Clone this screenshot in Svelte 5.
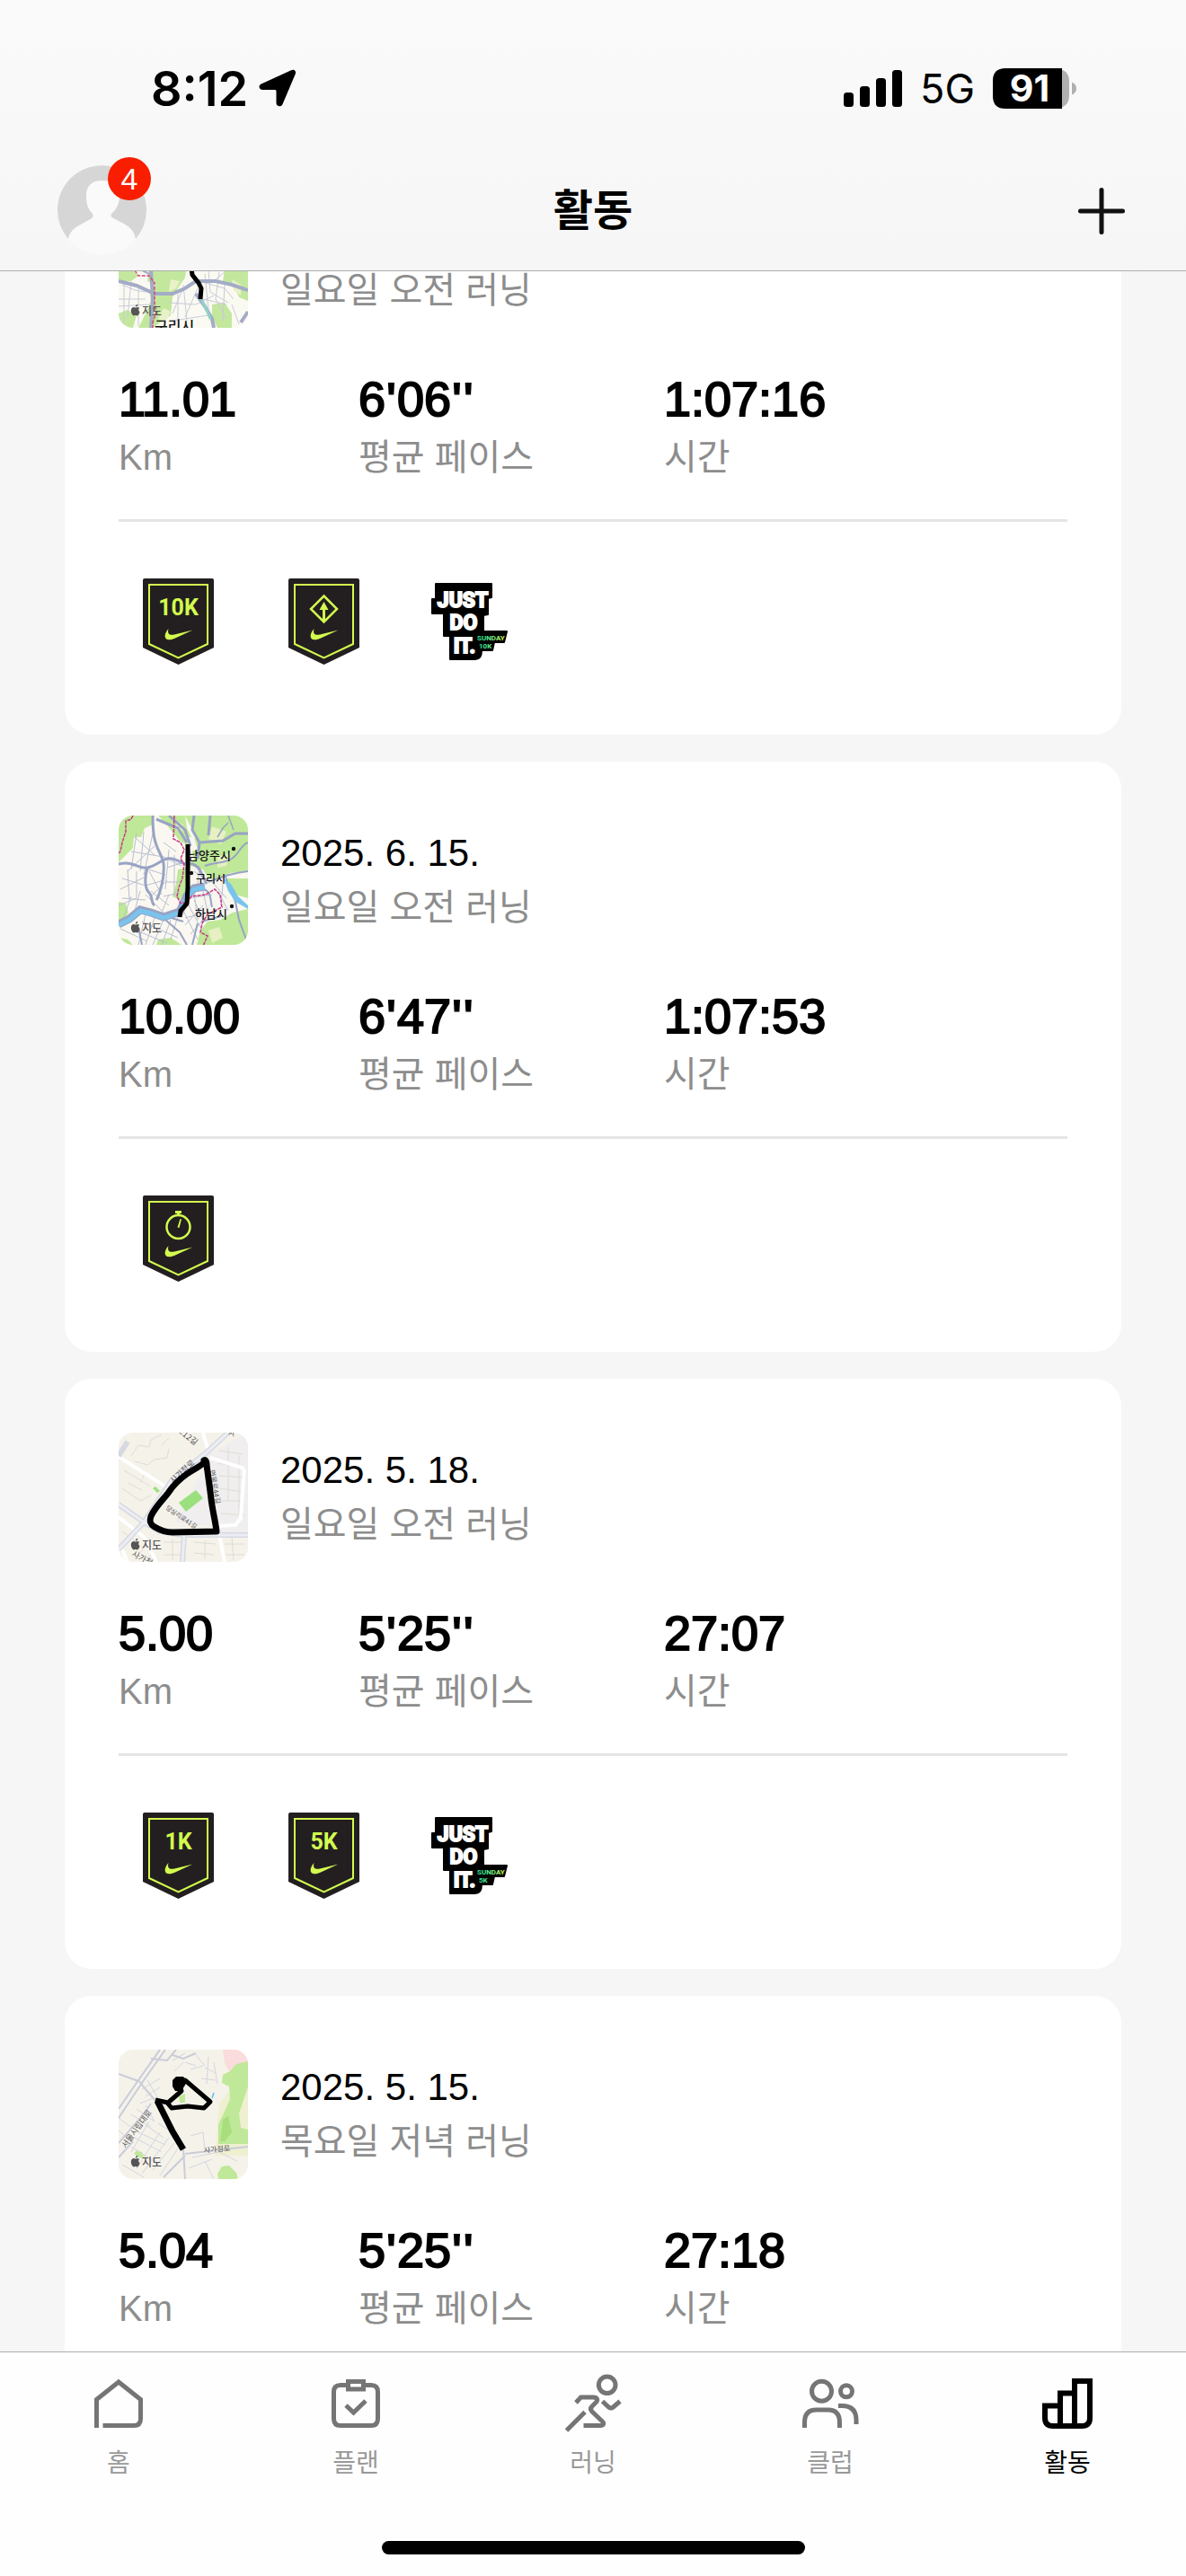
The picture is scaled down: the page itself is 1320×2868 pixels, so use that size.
<script>
	import { onMount } from 'svelte'

	let runs = [
		{
			map: 'guri',
			date: '2025. 6. 22.',
			title: '일요일 오전 러닝',
			distance: '11.01',
			pace: ['6', '06'],
			time: '1:07:16',
			badges: [
				{ type: 'distance', label: '10K' },
				{ type: 'longest' },
				{ type: 'sunday', label: '10K' }
			]
		},
		{
			map: 'hanam',
			date: '2025. 6. 15.',
			title: '일요일 오전 러닝',
			distance: '10.00',
			pace: ['6', '47'],
			time: '1:07:53',
			badges: [{ type: 'duration' }]
		},
		{
			map: 'triangle',
			date: '2025. 5. 18.',
			title: '일요일 오전 러닝',
			distance: '5.00',
			pace: ['5', '25'],
			time: '27:07',
			badges: [
				{ type: 'distance', label: '1K' },
				{ type: 'distance', label: '5K' },
				{ type: 'sunday', label: '5K' }
			]
		},
		{
			map: 'campus',
			date: '2025. 5. 15.',
			title: '목요일 저녁 러닝',
			distance: '5.04',
			pace: ['5', '25'],
			time: '27:18',
			badges: []
		}
	]

	let tabs = [
		{ id: 'home', label: '홈' },
		{ id: 'plan', label: '플랜' },
		{ id: 'run', label: '러닝' },
		{ id: 'club', label: '클럽' },
		{ id: 'activity', label: '활동' }
	]

	let active = $state('activity')
	let unread = $state(4)
	let feed

	onMount(() => {
		feed.scrollTop = 171
	})

	function select(e, id) {
		e.preventDefault()
		active = id
	}
</script>

{#snippet attribution()}
	<g fill="#555">
		<path d="M19.5 121.5c1-.8 2.600-.9 3.600.3-1.300 1-1.300 3.600.5 4.400-.6 2-1.800 4.300-3.100 4.300-.7 0-.9-.4-1.700-.4s-1 .4-1.700.4c-1.600 0-3.300-3.200-3.300-5.700 0-3 2.200-4.300 3.900-3.600.8.300 1.200.6 1.800.3zM18.800 120.600c0-1.500 1.100-2.700 2.500-2.900.1 1.600-1 2.900-2.500 2.900z" />
		<text x="26" y="130" font-size="12" font-weight="500">지도</text>
	</g>
{/snippet}

{#snippet swoosh()}
	<path fill="#d3fb4f" d="M28.500 56C23 62 23.500 68.500 29.500 68.300c2 0 4-.8 6.500-1.800L55.500 57.500 35 62.500c-5 1.100-8.200-.5-6.500-6.500z" />
{/snippet}

{#snippet mapTile(name)}
	<svg class="map" viewBox="0 0 144 144" role="img" aria-label="러닝 경로">
		{#if name === 'guri'}
			<rect width="144" height="144" fill="#fbfaf2" />
			<g fill="#c3e89d">
				<path d="M34 76h42l-2 12-8 12-6 10-2 20-20 14h-16l8-16 6-14-2-12 8-6-10-4z" />
				<path d="M0 80h16l6 6-8 6H0zM0 128l10-4 10 6-4 14H0zM104 118l14-2 8 12 0 16h-16l-6-12zM118 80h26v34l-10-4-6-14-12-4z" />
			</g>
			<path fill="#eaf1c8" d="M58 90l10 2-4 8-8 4zM50 122l8 4-6 12-8-4zM126 90l10 6v12l-8-6z" />
			<g fill="none" stroke="#c6cad9" stroke-width="1">
				<path d="M4 96l14 6 12 2M6 90v50M14 92l-4 40M0 112h30M0 120l34-2M22 96v46M60 128l10-24 20-14M56 116l30 2 20-10M66 104v30M72 96l4 40M96 84l4 40 6 20M90 92l28 8 10 12M100 80l2 24 20 12M112 82l-4 30 12 22M60 136l40-6M88 100l-14 32M118 96l-2 40M126 118l8 22M94 112l26 6M108 90l10-8" />
			</g>
			<g fill="none" stroke="#a3abc6" stroke-width="4">
				<path d="M0 92l20 5 20 9h20l14-6 12-8 22 0 18 4 18 6" />
				<path d="M36 80l2 30-2 34M86 106l10 14 8 14 2 10" />
				<path d="M34 84l-8-4" stroke-width="2" />
				<path d="M144 126l-8 12" />
			</g>
			<path fill="none" stroke="#8fd3c8" stroke-width="3" d="M90 108l8 16 4 10" />
			<path fill="none" stroke="#d0497c" stroke-width="1.500" stroke-dasharray="4 1.500" d="M18 80l4 6 12 0 6 8 0 22 2 10-4 12 0 6" />
			<path class="route" d="M76 40l4 30 2 15 7 9 3 6-1 12" />
			<text x="40" y="148" font-size="16" font-weight="500" fill="#111">구리시</text>
		{:else if name === 'hanam'}
			<rect width="144" height="144" fill="#faf8f0" />
			<g fill="#bfe898">
				<path d="M0 0h40l-2 10-9 4-4 10-8 0-1 12-6 6-10 10z" />
				<path d="M44 0h30l2 14 8 16-6 4-10-6-10-12-8-10zM74 0h70v62l-20 2-16 8-14-4-10 6-8-16 8-10-4-16 6-8z" />
				<path d="M66 60l12-2-2 24-8 12-8-4 4-14zM0 96l8 2 3 10-5 8-6 0zM144 104v40H87l4-16 8-10 14-2 14-8zM120 70h24v22l-14-4zM0 136l10 2 6 6H0zM44 138l14-2 12 8H42z" />
			</g>
			<path fill="#e6f0c2" d="M64 6l8 4-2 10-6-4zM104 12l16 6-6 14-14-6zM110 46l14-4-4 14-10 2zM100 128l12-4 4 12-12 6z" />
			<g fill="#f7f6ef">
				<path d="M80 56l14 4 6 10 16 4 14 16 2 10-14 6-8-2-8 12-8 6-10-14 0-18-6-6zM76 24l8 0 4 14-8 2z" />
			</g>
			<g fill="none" stroke="#b9bfd3" stroke-width="1">
				<path d="M18 24l22 20M14 40l36 6M8 52l44 14M20 20l-6 40M28 18l-4 44M38 20l-10 46M10 62l30-28M4 70l26 8M2 82l28-14M10 60l2 34M20 62v30M4 92l26 2M34 62l14 26M30 78l20-6M36 90l18-18M50 46l20 10M56 38l-4 44M62 44v46M54 58l18-6M52 74l16 0M50 90l18-4M50 30l14 10" />
				<path d="M0 100l20-8M14 90l-8 22M24 84l-6 22M30 88l20 20M56 88l-8 20M36 84l20 16M2 126l30 14M30 110l-8 34M40 114l-10 30M50 116l-12 28M58 116l-10 28M66 112l-8 26M26 118l40 18M20 128l34 14M72 106l16 32M78 100l14 26M84 94l10 22M74 122l20-22M80 132l18-20M78 92l26-4M84 86l4 30M94 84l6 28M74 114l24-6M84 62l14 10M90 56l-2 20M104 74l16 18M110 84l12 22M116 76l-2 24" />
			</g>
			<g fill="none" stroke="#98a3c4" stroke-width="3">
				<path d="M38 0c0 22 2 30 8 42s4 16 4 22-4 24-8 30M0 54c18-4 22 6 32 4s14-8 22-10 14 4 20 6M32 58c-4 14-2 24 2 28s2 12 6 14M42 4l24 10 10 16M56 0l18 16 6 18M84 0l-2 16 8 14-2 18M90 30l26-2 14-8 14 0M102 0l-2 22M76 54c8-2 14 4 16 10l6 12" />
				<path d="M144 30c-10 4-10 16-22 20s-16 2-26 6M100 74c16-6 26-10 44-12M118 66l12 30 4 20 8 22M72 118l-20-6M92 82c12 0 10 14 12 20M88 120l-6 24M22 124l4 20M52 116l16 14 8 14M92 118l22-6" stroke-width="2" />
				<path d="M110 24l6-10 6-6M128 16l-6-16" stroke-width="1.500" />
			</g>
			<path fill="none" stroke="#98a3c4" stroke-width="9" d="M0 121l12-6 12-10 12 3 14 5 18-6 8-18 8-8 12-2" />
			<path fill="none" stroke="#79c4ec" stroke-width="5" d="M0 122l12-6 12-10 12 3 14 5 18-6 8-18 8-8 12-2" />
			<path fill="#79c4ec" d="M117 70l8 6 8 14 11 10v4l-14-8-8-12z" />
			<g fill="none" stroke="#c43a86" stroke-width="1.500" stroke-dasharray="4 1">
				<path d="M16 0l-2 4-6 2 0 12-4 12-2 10-2 2M62 0l-1 26 8 4 4 8-4 10 4 6-2 16-4 10-2 10 4 8 8-2 4-6 16-2 10-6 6 6 2 14-8 4-8 4-6 10-2 10 8 4-8 18" />
			</g>
			<path class="route" d="M77 32v48l-1 18-7 8-1 7" />
			<g fill="#111" font-weight="500">
				<circle cx="128" cy="37" r="2.200" />
				<circle cx="81" cy="64" r="2.200" />
				<circle cx="126" cy="101" r="2.200" />
				<text x="77" y="49" font-size="13">남양주시</text>
				<text x="86" y="75" font-size="12">구리시</text>
				<text x="85" y="114" font-size="13">하남시</text>
			</g>
		{:else if name === 'triangle'}
			<rect width="144" height="144" fill="#f5f2ea" />
			<path fill="#f0eeee" d="M100 24l44-24v110l-34 2-10-80zM62 100l24-44 8-14 10 62z" />
			<g fill="none" stroke="#dfdcd6" stroke-width="1">
				<path d="M14 26l8-12 12 2 2-8 12-6M18 32l14 4 8-6 14-2 2-10M48 14l8-8M6 42l30 18M4 62l20 14 12-6M10 56l16 8M30 44l-6 12M112 20l26 4M110 34l28 4M112 48l28 2M112 62l26 4M114 76l26 0M114 90l26 2M122 16v60M134 26v64M126 116l2 26M50 122l24 0M50 136l24 0M60 118v24M84 122l24 2M84 134l22 2M96 120v20M118 124l22 0M118 136l22 0M6 98l18 14M4 110l14 10M32 120l-8 14M40 124l-6 16" />
			</g>
			<g fill="none" stroke="#fff" stroke-width="4">
				<path d="M0 27l52 33M108 104l22-1 6-8 4-54M112 114l6 30M0 94l28 22 14 28M94 0l6 22M140 40l-38-12M10 144l-8-18" />
			</g>
			<path fill="none" stroke="#d6d9e2" stroke-width="6" d="M0 130l28-30 32-48 38-30 26-24M0 80l30 21 16 9 24 4 74 0M73 114l-2 30M0 26l10-16" />
			<path fill="none" stroke="#eceef3" stroke-width="3" d="M0 130l28-30 32-48 38-30 26-24M0 80l30 21 16 9 24 4 74 0M73 114l-2 30" />
			<path fill="#9be07f" d="M67 78l19-14 8 9-19 15zM38 62l3-2 5 5-3 2z" />
			<g fill="#555" font-size="9">
				<text transform="translate(64 -2) rotate(38)">로12길</text>
				<text transform="translate(61 57) rotate(-43)">사가정로</text>
				<text transform="translate(52 85) rotate(34)" font-size="7">당심리로41길</text>
				<text transform="translate(14 137) rotate(28)">사가정</text>
				<text transform="translate(101 42) rotate(80)" font-size="8">면목로44길</text>
				<text x="122" y="3" font-size="8">사</text>
			</g>
			<path class="route wide" d="M96 32c-3 5-13 9-20 14S60 60 56 66 41 82 36 93c-2 6-1 9 4 12s12 6 20 6l49-1c-1-10-5-26-6-36s-4-30-5-38c0-4-1-6-3-5z" />
		{:else}
			<rect width="144" height="144" fill="#f5f2ea" />
			<path fill="#eef0d0" d="M112 60l8-10 12-10 12-14v92h-36z" />
			<path fill="#f9dcdb" d="M116 0h28v17l-12 0-9 7-5-8z" />
			<g fill="#bfe898">
				<path d="M116 28l8-4 7-8 13-3v28l-6 18-4 12 2 16 8 2v16h-33l0-22 5-10 8-18-1-14-8-4zM111 144l-1-6 5-8 8-1 8 8 2 7zM20 112l6 2 3 8-6-2-6-4zM67 52l7-3v10h-6z" />
			</g>
			<path fill="#a8de7e" d="M116 78l6-4 4 18-8 10-5 0z" />
			<g fill="none" stroke="#d3d5de" stroke-width="1">
				<path d="M60 12l14-8M62 24l10-10M74 14l12 4M80 22l14-4M86 6l10 12M96 20l12 6M92 32l16 2M100 8l-2 30M106 14l4 24M26 44l20-12M30 52l16-10M32 34l12 20M24 60l14-6M20 66l20 14M14 72l22 14M30 62l10 18M22 92l30 14M18 98l30 16M30 84l20 14M14 108l28 18M34 80l-20 34M46 92l-26 40M56 98l-30 40M62 104l-24 30M66 110l-20 30M44 82l22 14M0 76l16 12M0 90l14 12M4 128l24 14M80 96l14-4 2 20M82 120l30-6 20 10M78 132l26-10M96 124l10 20" />
			</g>
			<g fill="none" stroke="#c9ccd8" stroke-width="2">
				<path d="M46 0L22 34 0 66M52 0L28 34 0 76M60 6l12 4 14-6M22 34l8 10 12 14M0 27l22 8M72 110l2 34M74 116l70-8M74 118L50 142M36 10l18 2 10-12M0 104l26-30 10-14M0 120l16-18" />
			</g>
			<path fill="none" stroke="#5bc1e8" stroke-width="1.500" d="M106 48l-2 6" />
			<g fill="#555">
				<text transform="translate(8 110) rotate(-54)" font-size="9">서울시립대로</text>
				<text transform="translate(95 115) rotate(-5)" font-size="8">사가정로</text>
			</g>
			<path class="route" d="M41 56l14 3 15-13-4-10 8-2 28 24-7 7-18-2-18 2-5-6" />
			<path class="route wide" d="M43 57l8 16 9 18 12 20" />
			<path fill="#000" d="M60 34l4-4 8 0 4 6-6 10h-7l-3-5z" />
		{/if}
		{@render attribution()}
	</svg>
{/snippet}

{#snippet badge(item)}
	{#if item.type === 'sunday'}
		<svg width="85" height="86" viewBox="0 0 85 86" role="img" aria-label="Just Do It Sunday {item.label}">
			<defs>
				<linearGradient id="neon-{item.label}" x1="50" x2="83" y1="0" y2="0" gradientUnits="userSpaceOnUse">
					<stop offset="0" stop-color="#1fdca4" />
					<stop offset=".5" stop-color="#5ff08c" />
					<stop offset="1" stop-color="#e2f94a" />
				</linearGradient>
			</defs>
			<path stroke="#000" stroke-width="2" stroke-linejoin="round" d="M5 1h62v15l-4 1v18l-5 1v18h26l-3 12H70l-2 9H56q0 10-7 10H21V59h-7V34H1V18h4z" />
			<g class="jdi" text-anchor="middle">
				<text x="35" y="27">JUST</text>
				<text x="36" y="52">DO</text>
				<text x="37" y="78">IT.</text>
			</g>
			<g class="sunday" fill="url(#neon-{item.label})">
				<text x="51" y="64">SUNDAY</text>
				<text x="53" y="73">{item.label}</text>
			</g>
		</svg>
	{:else}
		<svg width="79" height="96" viewBox="0 0 79 96" role="img" aria-label={item.label ?? item.type}>
			<path fill="#231f20" d="M2 0h75q2 0 2 2v75L39.500 96 0 77V2q0-2 2-2z" />
			<path fill="none" stroke="#d3fb4f" stroke-width="2" d="M7 7h65v66L39.500 88.500 7 73z" />
			{#if item.type === 'distance'}
				<text class="flag" x="39.500" y="41" text-anchor="middle">{item.label}</text>
			{:else if item.type === 'longest'}
				<path fill="none" stroke="#d3fb4f" stroke-width="2.500" d="M39.500 19.500L54 34 39.500 48.500 25 34z" />
				<path fill="#d3fb4f" d="M39.500 26l5 9h-3.500v13h-3V35h-3.500z" />
			{:else}
				<circle cx="39.500" cy="35" r="13" fill="none" stroke="#d3fb4f" stroke-width="2.500" />
				<path fill="#d3fb4f" d="M36 17h7v3h-2v3h-3v-3h-2zM41.500 26l1.500.5-2.500 9.500-2-.5z" />
			{/if}
			{@render swoosh()}
		</svg>
	{/if}
{/snippet}

<div class="app">
	<header>
		<div class="status">
			<div class="clock">
				<span>8:12</span>
				<svg width="42" height="42" viewBox="0 0 42 42" aria-hidden="true">
					<path d="M36 1.300c3-1.800 6 .7 4.800 4L26.500 39c-1.500 3.500-7 3-7-1.500V25c0-1.500-.5-2-2-2H4.500C0 23-.8 18 2.700 16.500z" />
				</svg>
			</div>
			<div class="signals">
				<svg width="65" height="41" viewBox="0 0 65 41" aria-hidden="true">
					<rect y="25" width="11" height="16" rx="3.500" />
					<rect x="18" y="18" width="11" height="23" rx="3.500" />
					<rect x="36" y="9" width="11" height="32" rx="3.500" />
					<rect x="54" width="11" height="41" rx="3.500" />
				</svg>
				<span class="network">5G</span>
				<svg width="93" height="45" viewBox="0 0 93 45" role="img" aria-label="91%">
					<path d="M14 0h63v45H14Q0 45 0 31V14Q0 0 14 0z" />
					<path fill="#b0b0b0" d="M77 1.500q8 3.500 8 12.500v17q0 9-8 12.500zM88 15.500q5 2 5 7t-5 7z" />
					<text x="41" y="37" text-anchor="middle">91</text>
				</svg>
			</div>
		</div>
		<div class="titlebar">
			<button class="avatar" aria-label="프로필">
				<svg width="99" height="99" viewBox="0 0 99 99" aria-hidden="true">
					<circle cx="49.500" cy="49.500" r="49" fill="#fafafa" />
					<path fill="#d6d6d6" d="M12 81A49.500 49.500 0 1 1 87 81C85 69 76 65 68 61c-6-3-10-4-8-8 6-5 9-12 9-20 0-11-8-17-19.500-17S32 22 32 33c0 9 2 15 7 20 2 4-1 5-8 9-9 5-17 8-19 19z" />
				</svg>
				{#if unread}
					<span class="unread">{unread}</span>
				{/if}
			</button>
			<h1>활동</h1>
			<button class="add" aria-label="활동 추가">
				<svg width="60" height="60" viewBox="0 0 60 60" aria-hidden="true">
					<path d="M30 6.500v47M6.500 30h47" stroke="#111" stroke-width="5" stroke-linecap="round" />
				</svg>
			</button>
		</div>
	</header>

	<main bind:this={feed}>
		{#each runs as run}
			<article>
				<div class="summary">
					{@render mapTile(run.map)}
					<div>
						<p class="date">{run.date}</p>
						<p class="title">{run.title}</p>
					</div>
				</div>
				<dl>
					<div>
						<dt>Km</dt>
						<dd>{run.distance}</dd>
					</div>
					<div>
						<dt>평균 페이스</dt>
						<dd>{run.pace[0]}<b>'</b>{run.pace[1]}<b>''</b></dd>
					</div>
					<div>
						<dt>시간</dt>
						<dd>{run.time}</dd>
					</div>
				</dl>
				<ul>
					{#each run.badges as item}
						<li>{@render badge(item)}</li>
					{/each}
				</ul>
			</article>
		{/each}
	</main>

	<footer>
		<nav>
			{#each tabs as tab}
				<a
					href="#{tab.id}"
					class:active={active === tab.id}
					aria-current={active === tab.id ? 'page' : undefined}
					onclick={(e) => select(e, tab.id)}
				>
					<svg width="72" height="72" viewBox="0 0 72 72" aria-hidden="true">
						{#if tab.id === 'home'}
							<path d="M11.500 63V31.500L36 12l24.500 19.500V53q0 7.500-7.500 7.500H18.500" />
						{:else if tab.id === 'plan'}
							<path d="M27 15.500h-8q-7.500 0-7.500 7.500v30q0 7.500 7.500 7.500h34q7.500 0 7.500-7.500V23q0-7.500-7.500-7.500h-8M27.500 11.500h17v8.500h-17zM25 38l8.500 8L47 33" />
						{:else if tab.id === 'run'}
							<circle cx="51.700" cy="15.300" r="9.300" />
							<path d="M46.500 33.500l7 6.500q2.500 2 5 0l7.500-6.500M17 35l5.500-6H36c5 0 6 3 3 6l-4 4c-2 2-2 4 0 6l11.500 11c2 2 1.500 4.500-2 4.500H25.500M6.500 66L27 45.500" />
						{:else if tab.id === 'club'}
							<circle cx="26.500" cy="22.300" r="11" />
							<circle cx="54" cy="22.300" r="6.500" />
							<path d="M7.500 63v-6q0-14 13-14h13q13 0 13 14v6M45 38.500h4q16 0 16 16V59" />
						{:else}
							<path stroke-width="6" d="M28 38.500H11V52q0 9 9 9h32q9 0 9-9V11H44v50M44 24.500H28V61" />
						{/if}
					</svg>
					<span>{tab.label}</span>
				</a>
			{/each}
		</nav>
		<div class="home-indicator"></div>
	</footer>
</div>

<style>
	:global(body) {
		margin: 0;
		background: #f6f6f6;
	}

	.app {
		display: flex;
		flex-direction: column;
		height: 100vh;
		color: #000;
		font-family: 'Liberation Sans', 'Noto Sans CJK KR', sans-serif;
	}

	h1, p, dl, dd, ul {
		margin: 0;
		padding: 0;
	}

	button {
		padding: 0;
		border: 0;
		background: none;
		font: inherit;
		cursor: pointer;
	}

	svg {
		display: block;
		flex: none;
		overflow: visible;
	}

	/* header */
	header {
		flex: none;
		border-bottom: 1px solid #adadad;
		background: linear-gradient(#fafafa, #f6f6f6);
	}

	.status {
		display: flex;
		justify-content: space-between;
		align-items: center;
		box-sizing: border-box;
		height: 168px;
		padding: 28px 122px 0 168px;
		font-family: Inter, sans-serif;
	}

	.clock {
		display: flex;
		align-items: center;
		gap: 12px;
		font-size: 54px;
		font-weight: 600;
	}

	.signals {
		display: flex;
		align-items: center;
		gap: 20px;
	}

	.network {
		font-size: 45px;
	}

	.signals text {
		fill: #fff;
		font-size: 41px;
		font-weight: 700;
	}

	.titlebar {
		display: grid;
		grid-template-columns: 1fr auto 1fr;
		align-items: center;
		height: 133px;
		padding: 0 64px;
	}

	h1 {
		font-size: 48px;
		font-weight: 700;
		line-height: 60px;
	}

	.avatar {
		position: relative;
		justify-self: start;
	}

	.unread {
		position: absolute;
		top: -10px;
		right: -5px;
		width: 48px;
		border-radius: 24px;
		background: #fa1e00;
		color: #fff;
		font-size: 34px;
		line-height: 48px;
	}

	.add {
		justify-self: end;
	}

	/* feed */
	main {
		flex: 1;
		min-height: 0;
		overflow-y: auto;
		scrollbar-width: none;
		padding: 30px 72px 0;
	}

	article {
		margin-bottom: 30px;
		padding: 60px;
		border-radius: 30px;
		background: #fff;
	}

	.summary {
		display: flex;
		align-items: center;
		gap: 36px;
	}

	.map {
		width: 144px;
		height: 144px;
		border-radius: 16px;
		overflow: hidden;
		font-family: 'Noto Sans CJK KR', sans-serif;
	}

	.route {
		fill: none;
		stroke: #000;
		stroke-width: 5;
		stroke-linejoin: round;
	}

	.route.wide {
		stroke-width: 7;
	}

	.date {
		font-size: 42px;
		line-height: 60px;
	}

	.title {
		color: #8d8d8d;
		font-size: 40px;
		line-height: 60px;
	}

	dl {
		display: grid;
		grid-template-columns: 267fr 340fr 449fr;
		margin-top: 44px;
	}

	dl div {
		display: flex;
		flex-direction: column-reverse;
	}

	dt {
		color: #8d8d8d;
		font-size: 40px;
		line-height: 60px;
	}

	/* halfway between the regular and the bold cut */
	dd {
		font-size: 54px;
		line-height: 70px;
		-webkit-text-stroke: 2px #000;
	}

	dd b {
		-webkit-text-stroke: 0;
	}

	ul {
		display: flex;
		gap: 30px;
		min-height: 132px;
		margin-top: 39px;
		padding-top: 45px;
		border-top: 3px solid #e5e5e5;
		list-style: none;
	}

	li {
		display: flex;
		justify-content: center;
		align-items: center;
		width: 132px;
		height: 132px;
	}

	.flag {
		fill: #d3fb4f;
		font-family: Roboto, sans-serif;
		font-size: 25px;
		font-weight: 700;
	}

	.jdi {
		fill: #fff;
		stroke: #fff;
		stroke-width: 2;
		font-family: Roboto, sans-serif;
		font-size: 23px;
		font-weight: 700;
	}

	.sunday {
		font-family: Roboto, sans-serif;
		font-size: 8px;
		font-weight: 700;
	}

	/* tab bar */
	footer {
		flex: none;
		padding: 21px 0 24px;
		border-top: 1px solid #adadad;
		background: #fefefe;
	}

	nav {
		display: grid;
		grid-template-columns: repeat(5, 1fr);
	}

	nav a {
		display: flex;
		flex-direction: column;
		align-items: center;
		gap: 13px;
		color: #999;
		font-size: 28px;
		line-height: 36px;
		text-decoration: none;
	}

	nav svg {
		fill: none;
		stroke: #757575;
		stroke-width: 5;
	}

	nav a.active {
		color: #000;
	}

	nav a.active svg {
		stroke: #000;
	}

	.home-indicator {
		width: 471px;
		height: 15px;
		margin: 68px auto 0;
		border-radius: 8px;
		background: #000;
	}
</style>
